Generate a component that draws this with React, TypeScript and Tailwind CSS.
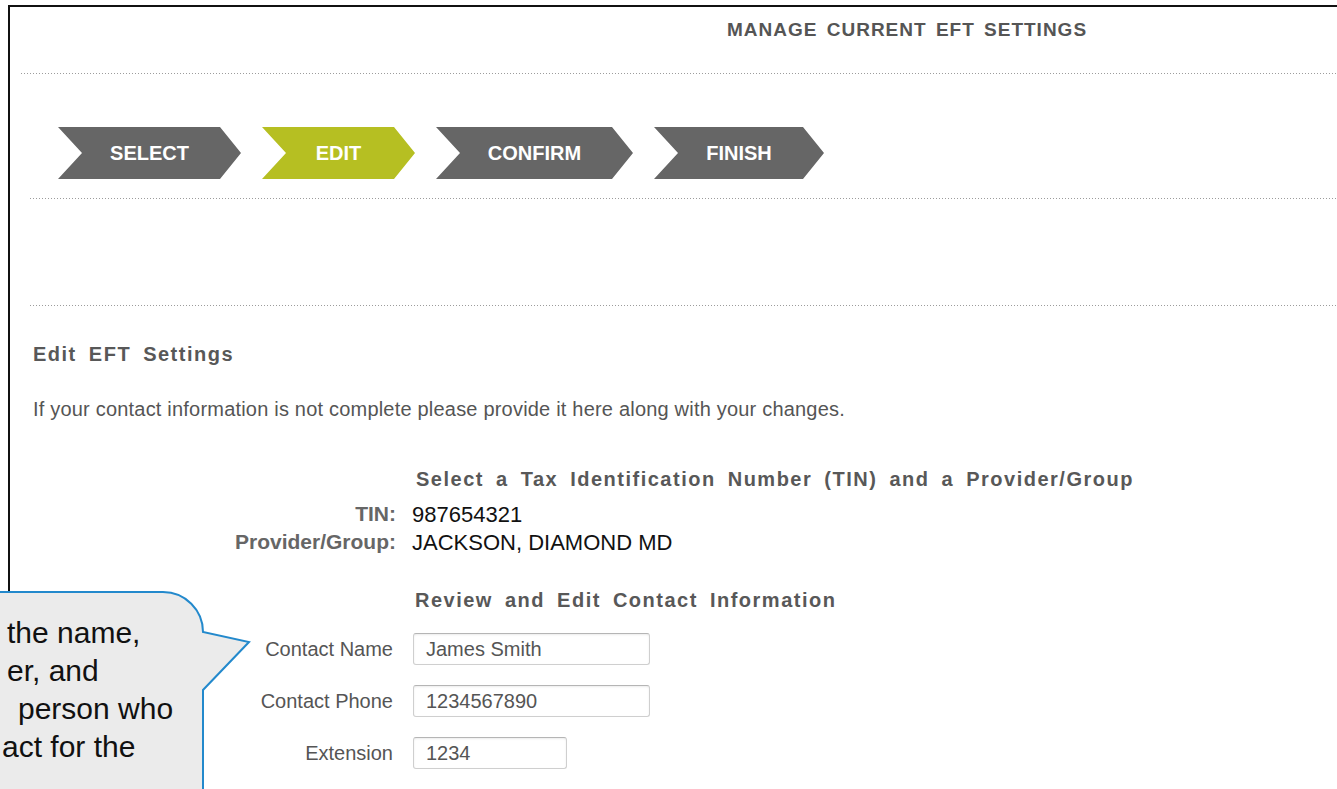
import React from "react";

const FONT = "font-['Liberation_Sans',Arial,sans-serif]";

const CHEVRON =
  "flex h-[52px] items-center justify-center text-[20px] font-bold text-white [clip-path:polygon(0_0,calc(100%_-_21px)_0,100%_50%,calc(100%_-_21px)_100%,0_100%,24px_50%)]";

const DOTS =
  "h-px bg-[linear-gradient(to_right,#9c9c9c_0_1px,transparent_1px)] bg-[length:3px_1px]";

const HEADING =
  "text-[20px] leading-[24px] font-bold text-[#585858] tracking-[1.5px] [word-spacing:5px]";

function Steps() {
  const steps = [
    { label: "SELECT", w: "w-[183px]", bg: "bg-[#666666]" },
    { label: "EDIT", w: "w-[153px]", bg: "bg-[#b6bf22]" },
    { label: "CONFIRM", w: "w-[197px]", bg: "bg-[#666666]" },
    { label: "FINISH", w: "w-[170px]", bg: "bg-[#666666]" },
  ];
  return (
    <div className="mt-[53px] ml-[48px] flex gap-[21px]">
      {steps.map((s) => (
        <div key={s.label} className={`${CHEVRON} ${s.w} ${s.bg}`}>
          {s.label}
        </div>
      ))}
    </div>
  );
}

function Field({
  label,
  value,
  width,
  className,
}: {
  label: string;
  value: string;
  width: string;
  className?: string;
}) {
  return (
    <div className={`flex h-[32px] items-center ${className ?? ""}`}>
      <div className="w-[383px] text-right text-[20px] text-[#555]">{label}</div>
      <div
        className={`ml-[20px] flex h-[32px] items-center rounded-[3px] border border-[#cfcfcf] border-t-[#b5b5b5] bg-white pl-[12px] text-[20px] text-[#555] shadow-[inset_0_1px_2px_rgba(0,0,0,0.08)] ${width}`}
      >
        {value}
      </div>
    </div>
  );
}

function Callout() {
  return (
    <div className="pointer-events-none absolute left-0 top-[580px] h-[209px] w-[262px] overflow-hidden">
      <svg className="absolute left-0 top-0" width="262" height="209" viewBox="0 0 262 209">
        <path
          d="M -10 240 V 12 H 163 A 40 40 0 0 1 203 52 L 249 62 L 203 110 V 240 Z"
          fill="#ebebeb"
          stroke="#2389cc"
          strokeWidth="2"
        />
      </svg>
      <div className="absolute left-0 top-[34px] text-[30px] leading-[38px] text-[#111] whitespace-nowrap">
        <div className="pl-[7px]">the name,</div>
        <div className="pl-[7px]">er, and</div>
        <div className="pl-[18px]">person who</div>
        <div className="pl-[2px]">act for the</div>
      </div>
    </div>
  );
}

export default function App() {
  return (
    <div className={`relative h-[789px] w-[1337px] overflow-hidden bg-white ${FONT}`}>
      <div className="pl-[8px] pt-[5px]">
        <div className="h-[900px] border-l-2 border-t-2 border-[#111]">
          {/* page title */}
          <div className="mt-[11px] pl-[717px] text-[19px] leading-[24px] font-bold text-[#555] tracking-[1px] [word-spacing:3px]">
            MANAGE CURRENT EFT SETTINGS
          </div>
          <div className={`mt-[31px] ml-[11px] ${DOTS}`} />

          <Steps />

          <div className={`mt-[19px] ml-[20px] ${DOTS}`} />
          <div className={`mt-[106px] ml-[20px] ${DOTS}`} />

          <div className={`mt-[36px] pl-[23px] ${HEADING} [word-spacing:4px]`}>Edit EFT Settings</div>
          <div className="mt-[31px] pl-[23px] text-[20px] leading-[24px] text-[#555] tracking-[0.2px]">
            If your contact information is not complete please provide it here along with your changes.
          </div>

          <div className={`mt-[46px] pl-[406px] ${HEADING}`}>
            Select a Tax Identification Number (TIN) and a Provider/Group
          </div>

          <div className="mt-[9px]">
            <div className="flex h-[28px] items-center">
              <div className="w-[386px] text-right text-[21px] font-bold text-[#666]">TIN:</div>
              <div className="ml-[16px] text-[22px] text-[#111]">987654321</div>
            </div>
            <div className="flex h-[28px] items-center">
              <div className="w-[386px] text-right text-[21px] font-bold text-[#666]">Provider/Group:</div>
              <div className="ml-[16px] text-[22px] text-[#111]">JACKSON, DIAMOND MD</div>
            </div>
          </div>

          <div className={`mt-[32px] pl-[405px] ${HEADING}`}>Review and Edit Contact Information</div>

          <Field className="mt-[21px]" label="Contact Name" value="James Smith" width="w-[237px]" />
          <Field className="mt-[20px]" label="Contact Phone" value="1234567890" width="w-[237px]" />
          <Field className="mt-[20px]" label="Extension" value="1234" width="w-[154px]" />
        </div>
      </div>
      <Callout />
    </div>
  );
}
